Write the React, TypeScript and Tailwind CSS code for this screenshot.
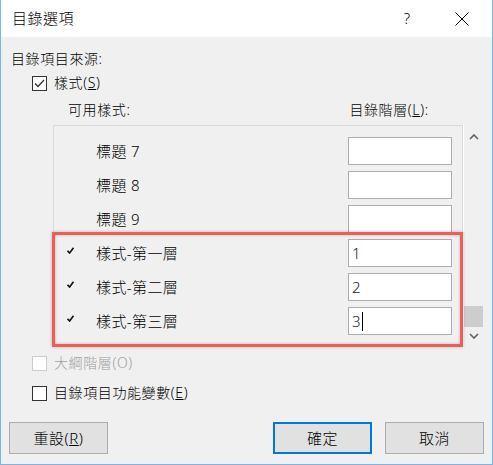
import React from "react";

const font = { fontFamily: '"Noto Sans", "Noto Sans CJK TC", sans-serif' };

function Box({ checked, disabled }: { checked?: boolean; disabled?: boolean }) {
  return (
    <div
      className={`w-[15px] h-[15px] border bg-white flex items-center justify-center shrink-0 ${
        disabled ? "border-[#cccccc]" : "border-[#333333]"
      }`}
    >
      {checked && (
        <svg width="11" height="9" viewBox="0 0 11 9">
          <path d="M1 4.5 L4 7.5 L10 1" fill="none" stroke="#333" strokeWidth="1.3" />
        </svg>
      )}
    </div>
  );
}

function Tick() {
  return (
    <svg width="7" height="7" viewBox="0 0 7 7" className="mt-[-6px]">
      <path d="M0.5 3.8 L2.6 6 L6.5 0.8" fill="none" stroke="#111" strokeWidth="1.6" />
    </svg>
  );
}

const rows = [
  { name: "標題 7", level: "", tick: false },
  { name: "標題 8", level: "", tick: false },
  { name: "標題 9", level: "", tick: false },
  { name: "樣式-第一層", level: "1", tick: true },
  { name: "樣式-第二層", level: "2", tick: true },
  { name: "樣式-第三層", level: "3", tick: true, caret: true },
];

function Button({ label, def }: { label: React.ReactNode; def?: boolean }) {
  return (
    <button
      className={`w-[99px] h-[32px] bg-[#e1e1e1] text-[15px] text-black flex items-center justify-center tracking-[0.5px] ${
        def ? "border-2 border-[#0078d7]" : "border border-[#adadad]"
      }`}
    >
      {label}
    </button>
  );
}

export default function App() {
  return (
    <div
      className="w-[493px] h-[465px] bg-[#f0f0f0] border-x border-b border-[#7ab4ec] flex flex-col text-black font-light"
      style={font}
    >
      {/* Title bar */}
      <div className="h-[37px] bg-white flex items-center pl-[11px] pr-[23px] shrink-0">
        <span className="text-[15px] leading-none tracking-[0.5px]">目錄選項</span>
        <span className="ml-auto text-[15px] leading-none mr-[45px]">?</span>
        <svg width="14" height="14" viewBox="0 0 14 14">
          <path d="M0.5 0.5 L13.5 13.5 M13.5 0.5 L0.5 13.5" stroke="#000" strokeWidth="1" />
        </svg>
      </div>

      {/* Body */}
      <div className="pl-[10px] flex flex-col text-[14px] tracking-[0.6px]">
        <div className="mt-[12px] h-[20px] leading-[20px]">目錄項目來源:</div>

        <div className="mt-[6px] h-[16px] flex items-center ml-[21px] gap-[7px]">
          <Box checked />
          <span className="leading-[16px]">
            樣式(<u>S</u>)
          </span>
        </div>

        <div className="mt-[9px] h-[20px] leading-[20px] flex">
          <span className="ml-[57px]">可用樣式:</span>
          <span className="ml-[219px]">
            目錄階層(<u>L</u>):
          </span>
        </div>

        {/* List with scrollbar */}
        <div className="mt-[5px] ml-[42px] flex relative">
          <div className="w-[410px] h-[220px] border-t border-x border-[#d9d9d9] pt-[8px] overflow-hidden">
            {rows.map((r) => (
              <div key={r.name} className="h-[34px] flex items-center">
                <div className="w-[42px] pl-[13px] flex items-center">{r.tick && <Tick />}</div>
                <span className="text-[15px] leading-none tracking-[0.4px]">{r.name}</span>
                <div className="ml-auto mr-[10px] w-[104px] h-[28px] bg-white border border-[#adadad] flex items-center pl-[3px] text-[15px] text-[#222]">
                  {r.level}
                  {r.caret && <span className="w-px h-[19px] bg-black ml-[1px]" />}
                </div>
              </div>
            ))}
          </div>
          <div className="w-[20px] h-[220px] border-l border-white flex flex-col items-center">
            <svg width="10" height="6" viewBox="0 0 10 6" className="mt-[9px]">
              <path d="M1 5 L5 1 L9 5" fill="none" stroke="#606060" strokeWidth="1.6" />
            </svg>
            <div className="mt-[166px] w-[19px] h-[21px] bg-[#cdcdcd]" />
            <svg width="10" height="6" viewBox="0 0 10 6" className="mt-[6px]">
              <path d="M1 1 L5 5 L9 1" fill="none" stroke="#606060" strokeWidth="1.6" />
            </svg>
          </div>

          {/* Annotation highlight */}
          <div className="absolute left-[-1px] top-[107px] w-[411px] h-[115px] border-[3px] border-[#f35b5b] shadow-[0_0_3px_rgba(0,0,0,0.25),inset_0_0_3px_rgba(0,0,0,0.25)]" />
        </div>

        <div className="mt-[10px] h-[16px] flex items-center ml-[21px] gap-[7px]">
          <Box disabled />
          <span className="leading-[16px] text-[#a0a0a0]">大綱階層(O)</span>
        </div>

        <div className="mt-[14px] h-[16px] flex items-center ml-[21px] gap-[7px]">
          <Box />
          <span className="leading-[16px]">
            目錄項目功能變數(<u>E</u>)
          </span>
        </div>
      </div>

      <div className="mt-[21px] flex pl-[8px] pr-[8px]">
        <Button
          label={
            <>
              重設(<u>R</u>)
            </>
          }
        />
        <div className="ml-auto flex gap-[13px]">
          <Button label="確定" def />
          <Button label="取消" />
        </div>
      </div>
    </div>
  );
}
